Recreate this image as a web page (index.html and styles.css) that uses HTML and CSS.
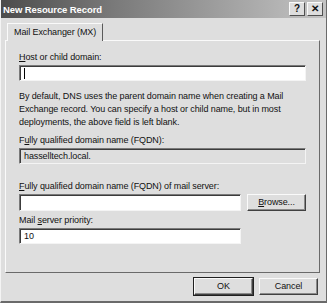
FILE: index.html
```html
<!DOCTYPE html>
<html>
<head>
    <meta charset="UTF-8">
    <title>New Resource Record</title>
    <link rel="stylesheet" href="styles.css">
</head>
<body>
    <div class="window">
        <div class="titlebar">
            <span class="title">New Resource Record</span>
            <span class="cap_btn">?</span>
            <span class="cap_btn">&#10005;</span>
        </div>
        <div class="tabs">
            <div class="tab">Mail Exchanger (MX)</div>
        </div>
        <div class="panel">
            <div class="label"><u>H</u>ost or child domain:</div>
            <div class="field"><span class="caret"></span></div>
            <p class="note">
                By default, DNS uses the parent domain name when creating a Mail<br>
                Exchange record. You can specify a host or child name, but in most<br>
                deployments, the above field is left blank.
            </p>
            <div class="label">F<u>u</u>lly qualified domain name (FQDN):</div>
            <div class="field readonly">hasselltech.local.</div>
            <div class="label gap"><u>F</u>ully qualified domain name (FQDN) of mail server:</div>
            <div class="row">
                <div class="field short"></div>
                <div class="button"><u>B</u>rowse...</div>
            </div>
            <div class="label">Mail <u>s</u>erver priority:</div>
            <div class="field short">10</div>
        </div>
        <div class="footer">
            <div class="button default">OK</div>
            <div class="button">Cancel</div>
        </div>
    </div>
</body>
</html>
```

FILE: styles.css
```css
body{
    margin:0;
    font-family:"Liberation Sans", Arial, sans-serif;
    font-size:9px;
    letter-spacing:-0.1px;
    color:#111;
}
.window{
    width:327px;
    height:303px;
    box-sizing:border-box;
    background:#dedede;
    border-left:1px solid #f4f4f4;
    border-right:1px solid #6a6a6a;
    border-bottom:2px solid #6a6a6a;
    display:flex;
    flex-direction:column;
}
.titlebar{
    height:18px;
    flex:none;
    display:flex;
    align-items:center;
    padding:0 3px 0 2px;
    background:linear-gradient(to right,#4c4c4c,#7a7a7a 35%,#c4c4c4);
}
.title{
    flex:1;
    color:#fff;
    font-weight:bold;
    font-size:9.5px;
    letter-spacing:-0.1px;
}
.cap_btn{
    width:14px;
    height:12px;
    margin-left:2px;
    background:#dedede;
    border:1px solid;
    border-color:#fafafa #505050 #505050 #fafafa;
    font-size:10px;
    font-weight:bold;
    line-height:12px;
    text-align:center;
    color:#111;
}
.tabs{
    display:flex;
    padding:4px 0 0 6px;
}
.tab{
    padding:3px 6px 3px 6px;
    border:1px solid;
    border-color:#fafafa #5a5a5a transparent #fafafa;
    border-bottom:none;
    position:relative;
    top:1px;
    background:#dedede;
    line-height:11px;
}
.panel{
    margin:0 6px 0 4px;
    height:233px;
    flex:none;
    box-sizing:border-box;
    border:1px solid;
    border-color:#fafafa #6a6a6a #6a6a6a #fafafa;
    padding:10px 13px 0 13px;
}
.label{
    line-height:13px;
    margin-bottom:1px;
    white-space:nowrap;
}
.label.gap{
    margin-top:16px;
}
.field{
    height:16px;
    box-sizing:border-box;
    background:#fff;
    border:1px solid;
    border-color:#7a7a7a #f4f4f4 #f4f4f4 #7a7a7a;
    box-shadow:inset 1px 1px 0 #3c3c3c;
    padding:1px 4px 0 4px;
    line-height:13px;
}
.field.readonly{
    background:#dedede;
}
.field.short{
    width:222px;
}
.caret{
    display:inline-block;
    width:1px;
    height:11px;
    background:#000;
    margin-top:1px;
}
.note{
    margin:9px 0 5px 0;
    line-height:13px;
    white-space:nowrap;
}
.row{
    display:flex;
    gap:6px;
    margin-bottom:3px;
}
.row .field{
    height:17px;
}
.button{
    width:59px;
    height:17px;
    box-sizing:border-box;
    border:1px solid;
    border-color:#fafafa #404040 #404040 #fafafa;
    box-shadow:inset -1px -1px 0 #8a8a8a;
    text-align:center;
    line-height:15px;
    background:#dedede;
}
.button.default{
    outline:1px solid #202020;
}
.footer{
    display:flex;
    justify-content:flex-end;
    gap:6px;
    padding:5px 8px 0 0;
}
```
